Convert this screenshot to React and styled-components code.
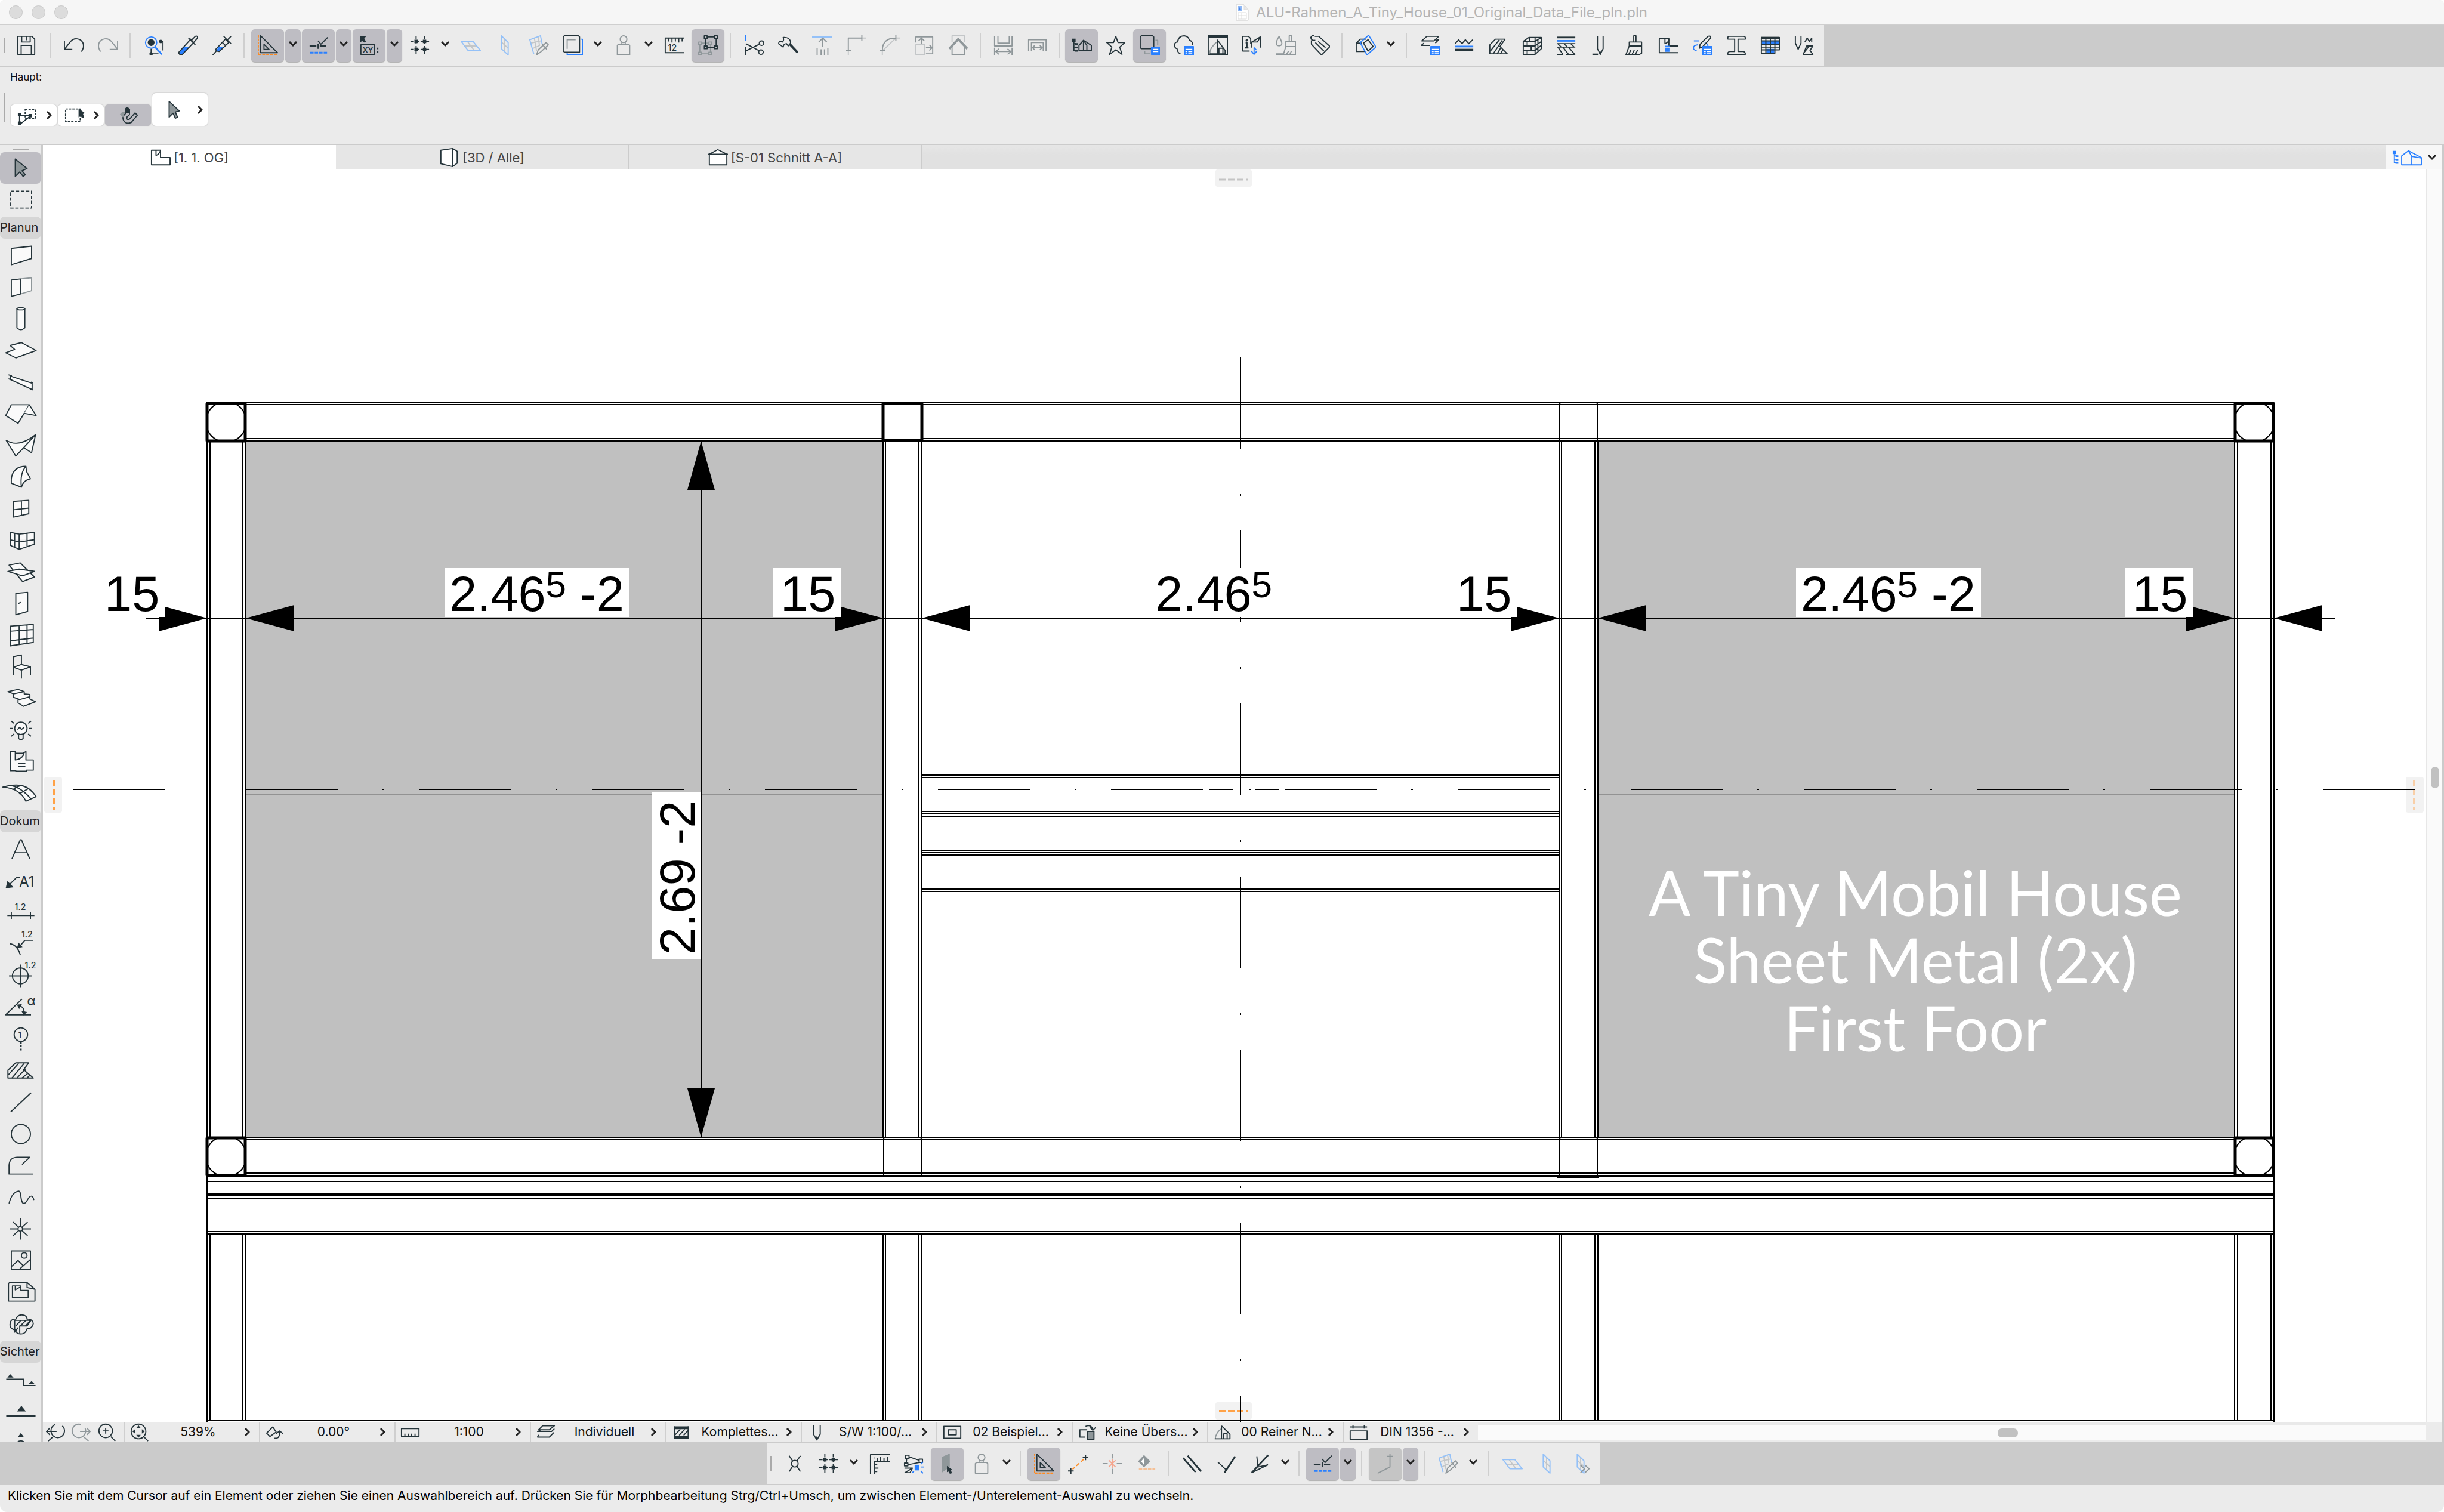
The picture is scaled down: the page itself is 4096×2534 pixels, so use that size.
import React from 'react';
import styled, { createGlobalStyle, css } from 'styled-components';

const D = '#25343a';
const G = '#8f979a';
const LG = '#c3c6c8';
const B = '#2a80ff';
const LB = '#94c1f8';
const O = '#ff8a1f';
const UI = "Inter, 'Liberation Sans', sans-serif";

const GlobalStyle = createGlobalStyle`
  * { box-sizing: border-box; }
  body { margin: 0; background: #fff; font-family: ${UI}; }
  button { font: inherit; color: inherit; border: 0; margin: 0; padding: 0; background: none; }
  svg { display: block; flex: none; }
`;

/* ---------- icon primitives ---------- */

const L = ({ d, c = D, f = 'none', w = 2, dash }) => (
  <path d={d} stroke={c} fill={f} strokeWidth={w} strokeDasharray={dash} strokeLinejoin="round" />
);
const T = ({ x, y, s = 12, children, c = D, weight = 500 }) => (
  <text x={x} y={y} fontSize={s} fontWeight={weight} fill={c} fontFamily="Inter, sans-serif">{children}</text>
);
const Note = () => (
  <>
    <L d="M19 20H35V35H19z" c={B} f={B} />
    <path d="M21 25H33M21 29H24M26 29H33M21 33H24M26 33H33" stroke="#fff" strokeWidth="2" />
  </>
);
const Person = () => (
  <>
    <circle cx="18" cy="7" r="6" fill="none" stroke={G} strokeWidth="2" />
    <L d="M15 12V16M21 12V16M9 16H27L29 18V35H7V18z" c={G} />
  </>
);
const Tri = () => (
  <>
    <L d="M5 1V31H35z" />
    <L d="M11 16V25H20z" />
    <L d="M1 0V35" c={O} dash="4 2" />
    <L d="M1 35H36" c={O} w={3} dash="5 2" />
  </>
);
const Snap = () => (
  <>
    <L d="M17 10L22 16L34 4" />
    <L d="M2 19H14M20 19H31M17 15V24" />
    <L d="M3 31H33" c={B} w={3} dash="6 2" />
  </>
);
const GridIcon = () => (
  <>
    <L d="M1 11H36M1 25H36M11 1V36M26 1V36" dash="6 3" />
    <path d="M8 8h6v6h-6zM23 8h6v6h-6zM8 22h6v6h-6zM23 22h6v6h-6z" fill={D} />
  </>
);
const PlaneA = () => (
  <>
    <L d="M7 19H29M12 11L24 27" c={LG} />
    <L d="M1 11H22L35 27H13z" c={LB} />
  </>
);
const PlaneB = () => (
  <>
    <L d="M18 6V29M12 12L24 23" c={LG} />
    <L d="M12 1L24 13V35L12 24z" c={LB} />
  </>
);
const PlaneC = () => (
  <>
    <L d="M10 4L14 28M17 2L19 17M4 14L22 10M6 24L20 18" c={LG} />
    <L d="M9 33L2 8L21 1L24 16" c={LB} />
    <L d="M14 35L17 26L31 13L35 17L21 30zM24 16L32 25" c={G} />
  </>
);
const Nodes = ({ c, x, y }) => (
  <g transform={`translate(${x} ${y})`}>
    <L d="M6 3H19M22 6V19M19 22H6M3 19V6" c={c} />
    <L d="M1 1h5v5h-5zM19 1h5v5h-5zM1 19h5v5h-5zM19 19h5v5h-5z" c={c} />
  </g>
);
const Tree = ({ c = D }) => (
  <>
    <path d="M1 6h6v6h-6zM6 14h5v3h-5zM6 20h5v3h-5zM6 26h5v3h-5z" fill={c} />
    <L d="M4 10V28M4 15H8M4 21H8M4 27H8" c={c} />
  </>
);
const Hatch = () => (
  <>
    <L d="M3 33V17L13 7H30L21 20L34 33z" />
    <L d="M4 28L20 8M9 33L25 9M16 33L22 23M22 33L26 26" />
  </>
);
const Pen = ({ x = 0 }) => <g transform={`translate(${x} 0)`}><L d="M13 2V24L18 34L23 24V2" /><L d="M18 29V34" w={3} /></g>;

const glyphs = {
  save: <><L d="M3 2H28L33 7V34H3z" /><L d="M10 2V12H25V2M18 2V9" /><L d="M9 34V18H27V34" /></>,
  undo: <L d="M1 10V25H15M1 25L12 11C18 4 30 5 34 14C36 20 34 26 31 29" />,
  redo: <L d="M35 10V25H21M35 25L24 11C18 4 6 5 2 14C0 20 2 26 5 29" c={G} />,
  find: <><circle cx="13" cy="13" r="10" fill="none" stroke={B} strokeWidth="2" /><circle cx="13" cy="13" r="6" fill={D} /><L d="M20 21L32 34" c={B} w={3} /><L d="M34 11V27M28 11H34" /><L d="M13 24V33H26" /><circle cx="30" cy="11" r="3" fill={D} /><circle cx="13" cy="33" r="3" fill={D} /></>,
  dropper: <><path d="M2 33L9 20H21L8 34z" fill={B} /><L d="M4 35L1 31L23 7L28 13L8 34z" /><L d="M19 5L31 17M24 9L31 2Q35 0 35 5L28 13" /></>,
  syringe: <><path d="M8 28L12 20H21L14 29z" fill={B} /><L d="M1 36L8 28L7 25L24 7L30 13L13 29L8 28M21 2L34 15M27 9L34 2M18 12L24 18" /></>,
  tri: <Tri />,
  snap: <Snap />,
  xy: <><path d="M2 2L12 2L9 6L12 11L9 13L5 10L2 13z" fill={D} /><L d="M3 17H27V34H3z" /><T x={6} y={31} s={13} weight={600}>XY</T><path d="M31 22h3v3h-3zM31 28h3v3h-3z" fill={D} /></>,
  grid: <GridIcon />,
  planeA: <PlaneA />,
  planeB: <PlaneB />,
  planeC: <PlaneC />,
  layers: <><L d="M33 7H35V35H8V31" c={B} /><L d="M3 1H28L30 3V30H3L1 28V3z" /><L d="M8 24V8H23" c={G} /></>,
  person: <Person />,
  ruler12: <><L d="M36 5H2V31H36M8 5V11M14 5V13M20 5V11M26 5V13M32 5V11" /><T x={7} y={27} s={15}>12</T></>,
  nodes: <><Nodes c={G} x={0} y={11} /><Nodes c={D} x={10} y={0} /></>,
  scissors: <><L d="M3 0V10" c={B} /><L d="M3 21V36M3 15L28 28M3 28L27 16" /><circle cx="31" cy="14" r="4" fill="none" stroke={D} strokeWidth="2" /><circle cx="30" cy="30" r="4" fill="none" stroke={D} strokeWidth="2" /></>,
  hammer: <><L d="M9 4C18 3 23 8 22 15L18 19L15 15Q10 15 9 21L1 15Q1 9 8 12Q11 8 9 4z" /><L d="M20 15L35 31" w={4} /></>,
  toline: <><L d="M0 3H36" c={LB} w={3} /><L d="M19 20V6M12 12L19 5L26 12M9 36V23M16 36V25M22 36V25M28 36V23" c={G} /></>,
  corner: <><L d="M4 27V36M28 5H36" c={LG} /><L d="M4 27V5H28M28 0V10M0 27H9" c={G} /></>,
  fillet: <><L d="M4 27V36M28 5H36M6 26L26 7" c={LG} /><L d="M4 27C4 13 12 5 28 5M28 0V10M0 27H9" c={G} /></>,
  resize: <><L d="M3 17H19V34H3z" c={LG} /><L d="M3 13V3H33V33H21M13 15V6M8 10L13 5L18 10M21 22H31M27 17L32 22L27 27" c={G} /></>,
  eave: <><L d="M7 12V1H29V12" c={LG} /><L d="M2 24L18 7L34 24" c={G} w={4} /><L d="M7 21V35H29V21" c={G} /></>,
  dimA: <><L d="M3 2V19H34V2M9 2V14H29V2M3 22V36M34 22V36M5 29H32M11 24L5 29L11 34M26 24L32 29L26 34" c={G} /></>,
  dimB: <><L d="M3 28V8H34V28M8 28V13H29V28M10 22H27M14 18L10 22L14 26M23 18L27 22L23 26" c={G} /></>,
  house: <><Tree /><L d="M13 27V18L21 9L35 18V27zM21 9L27 18V27M21 9V27" /></>,
  star: <L d="M18 2L22 13L34 13L25 21L29 34L18 26L7 34L11 21L2 13L14 13z" />,
  pages: <><L d="M28 9H32V18M9 28V33H18" c={G} /><L d="M3 1H23L25 3V24H3L1 22V3z" /><L d="M21 21H36V34H21z" c={B} f={B} /><path d="M24 25H33M24 29H33" stroke="#fff" strokeWidth="2" /></>,
  cloud: <><L d="M12 33C6 31 7 26 6 24C0 22 0 12 7 12C8 3 14 1 19 1C26 2 27 6 28 9C33 10 34 15 33 17" /><g><Note /></g></>,
  view: <><L d="M1 1H35V35H1z" /><path d="M0 0H36V5H0z" fill={D} /><L d="M4 33C3 24 10 18 16 12" c={G} /><L d="M17 8V33M17 8L31 27V33H4M20 33V23H27V33" /></>,
  info: <><L d="M16 6L12 2H2V28H14M16 6V15M18 22V12L33 3V22M18 12H28L33 3" /><circle cx="9" cy="9" r="2" fill={D} /><L d="M7 13H9V22M6 22H12" w={3} /><L d="M22 22V34M17 28L22 34M27 28L22 34M22 22L26 26" c={B} /></>,
  paint: <><L d="M6 2C1 10 1 13 1 15C2 20 10 20 11 15C11 11 9 8 6 2z" c={G} /><L d="M24 11V1H28V11M18 11H35V20H18zM18 20L14 33M35 20V35H1M23 28L19 34M28 28L25 34" c={G} /><L d="M1 34H14" c={G} w={4} /></>,
  tag: <><L d="M9 2H16L36 20L21 35L3 16V9M10 9Q2 10 2 4Q3 0 8 1M10 13L25 28M15 11L28 22" /></>,
  cube: <><L d="M18 7H8L1 14V29H16M1 14H11" /><L d="M23 0L36 21L20 35L8 13z" c={B} /><L d="M22 8L31 20L22 28L14 14z" /></>,
  attrLayer: <><L d="M12 2H33L25 10H3zM7 14L2 18H18M28 9L33 8L27 14" /><Note /></>,
  lineType: <><L d="M2 15L8 8L14 15L20 8L26 15L33 8" /><L d="M2 20H34" c={B} w={3} /><L d="M2 26H34" w={4} /></>,
  hatch: <Hatch />,
  bricks: <><L d="M2 11L12 4H34V24L23 34H2zM2 11H23V34M23 11L34 4M2 19H23L34 11M2 27H23L34 18M9 11V19M16 19V27M9 27V34M13 4V11M23 4V11M28 8V28" /></>,
  composite: <><L d="M2 4H34" w={3} /><L d="M2 10H34" c={B} w={3} /><L d="M2 15H34M2 34H12M18 34H34M2 21H34M3 21L12 34M12 21L22 34M22 21L33 34M3 15L9 21M14 15L20 21M26 15L32 21" /></>,
  pen: <><Pen /><L d="M4 34H14" w={3} /></>,
  brush: <><L d="M17 11V1H21V11M9 12H31V19H9zM9 19L3 35H25L31 32V19M12 26L8 34M18 26L14 34M24 26L20 34" /></>,
  zoneCat: <><L d="M2 6H19V19H36V31H2z" /><L d="M12 6V15Q18 13 19 8" /><L d="M12 20H20M12 24H20M12 28H20" c={B} w={3} /></>,
  penList: <><L d="M3 10H12M10 17C0 18 0 26 8 27M22 14Q28 14 28 20" c={B} /><L d="M13 23L14 16L28 2Q33 0 33 5L19 20zM20 9" /><Note /></>,
  profile: <L d="M5 2H31Q34 2 34 5V7H21V29H31Q34 30 34 34H3Q2 30 6 29H15V7H3Q2 2 5 2z" />,
  table: <><path d="M3 10h10v5h-10zM3 10h30v5h-30zM11 24h14v8h-14z" fill={B} /><L d="M2 4H34V26H26V32H2zM2 10H34M2 16H34M2 21H34M2 26H26M10 4V32M18 4V32M26 4V26" /><L d="M2 5H34" w={4} /></>,
  penSet: <><g transform="translate(-11 0)"><L d="M13 2V14L18 25L23 14V2M18 20V26" /></g><L d="M19 12L23 5L27 11L31 5V12M16 34L22 19H33L28 27L33 34zM18 30L26 20" /></>,
  cross: <><L d="M8 4L14 13M28 4L22 13M8 32L14 23M28 32L22 23" /><circle cx="18" cy="18" r="6" fill="none" stroke={D} strokeWidth="2" /></>,
  rulers: <><L d="M36 2H2V36M9 36V14H36M8 8H9M14 14V8M20 14V6M26 14V8M32 14V6M9 20H14M9 26H16M9 32H14" /></>,
  trace: <><L d="M4 3H10V9H4zM28 10H34V16H28zM2 17H8V22H2zM10 6L28 12M6 9L5 17M8 20L28 16M2 26H16L12 34H2M3 34L14 27" /><path d="M20 20H28V30H20z" fill={B} /><L d="M31 19L35 15M31 31L35 35M31 24H36M16 34L19 31" c={B} /></>,
  pickface: <><path d="M8 6L22 0V24L8 34z" fill={G} /><path d="M17 22L27 29L24 30L26 35L22 36L20 32L17 33z" fill={D} /></>,
  guide: <><L d="M31 2V12M26 7H36M5 26V36M0 31H10" /><L d="M28 10L8 28" c={O} dash="7 4" /></>,
  guideX: <><L d="M18 0V9M18 27V36M1 18H10M26 18H35" c={G} /><L d="M12 12L24 24M24 12L12 24M18 10V26" c="#f5a48c" /></>,
  guideOff: <><L d="M14 4L5 14L14 23L24 14z" c={G} f={G} /><path d="M14 8L9 14L14 20z" fill="#fff" /><L d="M5 28H34" c="#f5c096" w={3} dash="6 2" /></>,
  parallel: <L d="M2 8L24 33M10 4L34 32" w={3} />,
  perp: <><L d="M3 15L18 29" /><L d="M34 5L15 34" w={3} /></>,
  bisect: <><L d="M12 5L14 24L32 20M3 34L32 20" /><L d="M32 3L3 34" w={3} /></>,
  segEnd: <><L d="M26 0V12M21 5H31M26 12V24L4 35" c={G} /></>,
  planeNext: <><PlaneB /><L d="M18 21L25 27L18 34M26 21L33 27L26 34" c={G} /></>,

  selTool: <><L d="M14 8H32V24H14z" dash="4 2" /><L d="M4 16V35M4 19H25M24 19L5 34" /><path d="M1 14h6v6h-6zM20 16h6v6h-6zM1 29h6v6h-6z" fill={D} /></>,
  marqueeSel: <><L d="M2 7H28V29H2z" dash="4 2" /><path d="M25 6L36 14L33 16L35 22L31 23L29 19L25 22z" fill={D} /></>,
  magnet: <><L d="M12 8Q14 2 19 8L19 17L14 22Q14 27 19 25L29 14L33 18L22 31Q12 35 8 26Q6 20 12 15z" /><path d="M11 8Q14 0 20 8V14H11z" fill={D} /><path d="M2 17Q4 12 11 12L8 22z" fill={G} /></>,
  arrow: <L d="M10 3V31L17 24L21 33L25 31L21 22L28 20z" f={G} />,

  story: <L d="M2 5H18V18H35V31H2zM10 5V14Q15 13 17 7" f="#fff" />,
  box3d: <L d="M3 5L24 2L32 7V28L24 34L3 29zM24 2V34" f="#fff" />,
  section: <L d="M3 12L18 4L34 12V31H3zM1 12H36" f="#fff" />,

  zoomPrev: <><circle cx="22" cy="16" r="12" fill="none" stroke={D} strokeWidth="2" strokeDasharray="52 13 12" /><L d="M2 17H20M8 11L2 17L8 23M13 27L5 34" /></>,
  zoomNext: <><circle cx="14" cy="16" r="12" fill="none" stroke={G} strokeWidth="2" strokeDasharray="60 10" /><L d="M16 17H34M28 11L34 17L28 23M23 27L31 34" c={G} /></>,
  zoomIn: <><circle cx="16" cy="16" r="12" fill="none" stroke={D} strokeWidth="2" /><L d="M16 11V21M11 16H21M25 26L33 34" /></>,
  zoomFit: <><circle cx="16" cy="17" r="13" fill="none" stroke={D} strokeWidth="2" /><path d="M16 6l4 5h-8zM16 28l4-5h-8zM5 17l5-4v8zM27 17l-5-4v8z" fill={D} /><L d="M25 26L33 34" /></>,
  rotate: <><L d="M3 20L14 9L20 18L9 26z" /><L d="M17 29H21Q27 27 26 17M20 21L26 16L32 21" /></>,
  scale: <L d="M2 12H33V26H2zM8 26V21M14 26V21M20 26V21M26 26V21" />,
  stack: <L d="M12 7H33L24 14H5zM9 17H3L28 17L33 12M5 23L3 27H24L32 19M9 14L4 17" />,
  solid: <><path d="M5 8H31V13H5zM5 25H31V30H5z" fill={D} /><L d="M6 8V30M30 8V30M6 24L16 13M14 24L24 13M22 24L30 15" /></>,
  penS: <L d="M12 6V22L18 32L24 22V6M18 26V32" />,
  frame: <L d="M3 8H33V29H3zM11 14H25V23H11z" />,
  override: <><L d="M17 14H4V27H13M14 8Q24 4 27 13M22 10L27 15L32 10" /><L d="M17 17H29V31H17z" f={G} /></>,
  renov: <><L d="M4 30Q5 19 15 12" c={G} /><L d="M15 7V30M15 7L30 22V30H3M19 30V21H25V30" /></>,
  dimStd: <L d="M3 16H33V31H3zM3 9H33M8 6V12M28 6V12" />,
};

const W = '#fafafa';
const toolGlyphs = {
  arrow: <L d="M26 11V42L34 34L40 42L44 39L38 32L47 28z" f={G} />,
  marquee: <L d="M18 12H55V42H18z" dash="6 3" />,
  wall: <L d="M19 14L55 10V32L19 43z" f={W} />,
  door2: <><L d="M35 12L55 10V33L35 39z" c={G} f={W} /><L d="M19 14L35 12V39L19 43z" f={W} /></>,
  column: <><L d="M29 9V43Q36 49 43 43V9z" f={W} /><ellipse cx="36" cy="9" rx="7" ry="2" fill={W} stroke={D} strokeWidth="2" /></>,
  slab: <L d="M9 31L27 40L63 27L37 13L17 18L25 25z" f={W} />,
  beam: <><L d="M17 16L56 29V40L17 22z" f={W} /><L d="M14 14L20 16M14 21L19 23M54 27L58 28M52 39L58 41" /></>,
  roof: <><L d="M9 30L19 11H51L31 44z" f={W} /><L d="M51 11L63 30L42 26" f={W} /></>,
  shell: <><L d="M62 8L55 40L41 31" f={W} /><L d="M10 18Q32 32 62 8L27 46z" f={W} /></>,
  morph: <><L d="M19 38V30Q22 8 45 8L46 17L53 30Q40 33 37 45z" f={W} /><L d="M45 8Q34 20 37 45" /></>,
  window: <L d="M23 14L50 12V36L23 42zM37 13V39M23 29L50 26" f={W} />,
  curtain: <L d="M17 13L33 16L60 13V34L33 43L17 36zM33 16V43M25 15V39M47 14V38M17 26L33 30L60 26" f={W} />,
  skylight: <><L d="M15 15L35 11L60 36L39 44z" f={W} /><L d="M13 26L33 22L60 26L39 34z" f={W} /></>,
  door: <L d="M27 9L48 7V41L27 47zM31 27L36 25" f={W} />,
  opening: <L d="M17 11L58 8V40L17 46zM33 10V44M47 9V42M17 20L58 17M17 37L58 32" f={W} />,
  chair: <><L d="M23 42V9L37 6V24" /><L d="M23 28L37 23L53 27L37 33z" f={W} /><L d="M53 27V42M37 33V48" /></>,
  stair: <L d="M13 15L31 11L42 15L23 19zM23 19V25L34 29L52 24V20L42 19V15M31 27V35L41 41L62 33L52 28V24" f={W} />,
  lamp: <><circle cx="36" cy="24" r="11" fill={W} stroke={D} strokeWidth="2" /><L d="M30 26L34 22L37 26L42 22M32 34V42Q36 46 40 42V34" /><L d="M16 24H22M19 11L24 15M19 38L24 34M56 24H50M54 11L49 15M54 38L49 34" /></>,
  zone: <L d="M17 43V9H26V12H40L45 9V24H58V42H46V44H27V43zM26 12V24Q38 23 42 12M31 30H44M31 35H44" f={W} />,
  mesh: <><L d="M4 16Q22 11 36 13Q52 16 63 33L45 41Q34 18 4 16z" f={W} /><L d="M17 13Q36 16 54 37M36 13Q27 16 21 21M49 19L33 28" /></>,
  text: <L d="M20 44L35 10H37L52 44M26 33H46" />,
  label: <><path d="M9 40L12 27L23 38z" fill={D} /><L d="M14 35L28 21H34" /><T x={33} y={37} s={25} weight={400}>A1</T></>,
  dim: <><T x={25} y={22} s={15}>1.2</T><L d="M12 32H60M19 26V39M53 26V39" /></>,
  dimRad: <><T x={37} y={15} s={15}>1.2</T><L d="M16 26Q30 28 35 46M58 20H43L33 32" /><path d="M29 34L32 24L39 32z" fill={D} /></>,
  level: <><circle cx="35" cy="27" r="14" fill="none" stroke={D} strokeWidth="2" /><L d="M15 27H55M35 7V47" /><T x={43} y={14} s={15}>1.2</T></>,
  angle: <><T x={47} y={23} s={22}>α</T><L d="M54 40H9L38 12M31 24Q42 24 42 38" /><path d="M29 22L38 21L33 30zM37 33L47 35L41 41z" fill={D} /></>,
  marker: <><circle cx="36" cy="19" r="12" fill="none" stroke={D} strokeWidth="2" /><T x={31} y={25} s={15}>1</T><L d="M36 32V48" dash="3 3" w={3} /></>,
  fill: <><L d="M13 40V26L27 13H50L41 25L58 40z" /><L d="M14 34L32 14M20 40L42 14M29 40L44 24M38 40L48 32M47 40L52 35" /></>,
  line: <L d="M18 44L54 10" />,
  circle: <circle cx="36" cy="27" r="17" fill="none" stroke={D} strokeWidth="2" />,
  poly: <L d="M58 42H15V26Q16 12 30 12H52L38 25" />,
  spline: <L d="M15 38Q20 18 32 16C38 16 34 36 41 38C48 38 48 24 55 25Q58 26 59 32" />,
  hotspot: <><circle cx="35" cy="27" r="4" fill="none" stroke={D} strokeWidth="2" /><L d="M16 27H31M39 27H54M35 8V23M35 31V46M22 15L32 24M48 15L38 24M22 39L32 30M48 39L38 30" /></>,
  image: <><L d="M19 10H53V43H19zM19 38L31 27L41 37M33 43L53 25" /><circle cx="42" cy="18" r="5" fill="none" stroke={D} strokeWidth="2" /></>,
  drawing: <><L d="M16 10H47L61 22V43H14V12zM47 10V19L61 22" /><L d="M21 16H36V24H49V37H21zM26 16V23L35 18" /></>,
  change: <><L d="M26 38Q15 36 17 26Q18 18 27 19Q31 9 42 12Q47 14 47 19Q57 18 58 27Q56 36 47 36Q44 46 35 45Q28 45 26 38z" /><L d="M25 21H54L47 31H34V44M25 21V42L31 34M27 31L36 21M35 31L45 21M44 31L53 21" /></>,
  sectionTool: <><path d="M12 23L17 17L23 23zM49 35L55 29L61 35z" fill={D} /><L d="M10 26H41V37H62" /></>,
  elevTool: <><path d="M29 27L37 17L45 27z" fill={D} /><L d="M10 35H62" /></>,
  interiorTool: <><path d="M31 16L36 9L41 16zM16 30L22 25L25 31zM56 30L50 25L47 31z" fill={D} /><circle cx="36" cy="32" r="9" fill="none" stroke={D} strokeWidth="2" /></>,
};

const Icon = ({ name }) => <svg width="34" height="34" viewBox="0 0 36 36" aria-hidden="true">{glyphs[name]}</svg>;
const ToolIcon = ({ name }) => <svg width="68" height="51" viewBox="0 0 72 54" aria-hidden="true">{toolGlyphs[name]}</svg>;
const ChevDown = () => (
  <svg width="14" height="10" viewBox="0 0 14 10" aria-hidden="true"><path d="M1 1L7 7L13 1" fill="none" stroke="#222" strokeWidth="3" /></svg>
);
const ChevRight = () => (
  <svg width="10" height="14" viewBox="0 0 10 14" aria-hidden="true"><path d="M2 1L8 7L2 13" fill="none" stroke="#222" strokeWidth="3" /></svg>
);

/* ---------- layout ---------- */

const Window = styled.div`
  display: flex; flex-direction: column; height: 100vh; min-height: 900px; overflow: hidden;
  background: #ebebeb; border-radius: 8px 8px 12px 12px;
`;
const TitleBar = styled.header`
  display: flex; align-items: center; height: 42px; flex: none; padding-left: 15px;
  background: #f6f6f6; border-bottom: 2px solid #cfcfcf;
`;
const Lights = styled.div`display: flex; gap: 15px; flex: none;`;
const Light = styled.button`
  width: 23px; height: 23px; border-radius: 50%; background: #dcdcdc; border: 1px solid #c9c9c9;
`;
const DocTitle = styled.h1`
  display: flex; align-items: center; gap: 12px; margin: 0 0 0 auto; width: 50.5%; padding: 2px 0 0 36px;
  font-size: 24px; line-height: 32px; font-weight: 400; color: #b4b4b4; white-space: nowrap;
`;
const DockRow = styled.div`
  display: flex; flex: none; background: #cbcbcb;
  ${p => p.$bottom
    ? css`height: 72px; padding: 2px 0 2px 1285px;`
    : css`height: 70px; border-bottom: 2px solid #cbcbcb;`}
`;
const Bar = styled.div`
  display: flex; align-items: center; gap: 2px; background: #ebebeb; padding: 0 6px;
`;
const Grip = styled.span`width: 2px; height: 26px; background: #aaa; flex: none;`;
const BarGrip = styled(Grip)`margin-right: ${p => p.$space}px;`;
const Sep = styled.span`
  width: 2px; height: 42px; background: #cfcfcf; flex: none;
  margin: 0 ${p => (p.$tight ? 7 : 9)}px 0 ${p => (p.$wide ? 10 : 7)}px;
`;
const BarButton = styled.button`
  display: flex; align-items: center; justify-content: center; flex: none;
  width: ${p => (p.$narrow ? 26 : 55)}px; height: 55px; border-radius: 6px;
  ${p => p.$on && css`background: ${p.$dim ? '#c5c5c5' : '#bebdc3'}; box-shadow: 0 1px 1px #b0b0b0;`}
  ${p => p.$narrow && css`padding-bottom: 4px;`}
`;

const InfoBox = styled.section`
  height: 131px; flex: none; border-bottom: 2px solid #cbcbcb; padding: 7px 0 0 6px;
`;
const InfoLabel = styled.div`padding-left: 11px; font-size: 17px; line-height: 20px; color: #111;`;
const InfoRow = styled.div`display: flex; align-items: flex-end; gap: 2px; padding-top: 17px;`;
const InfoGrip = styled(Grip)`height: 49px; align-self: flex-start; margin-right: 8px;`;
const InfoButton = styled.button`
  display: flex; align-items: center; justify-content: center; flex: none; border-radius: 6px;
  background: ${p => (p.$on ? '#bebdc3' : '#fff')}; box-shadow: 0 0 2px #a8a8a8;
  ${p => (p.$big
    ? css`width: 93px; height: 55px; gap: 22px; padding-left: 10px;`
    : css`width: 77px; height: 36px; gap: 14px; padding-left: 3px;`)}
`;

const Middle = styled.div`display: flex; flex: 1; min-height: 0;`;
const Sidebar = styled.nav`
  width: 72px; flex: none; border-right: 3px solid #cbcbcb; overflow: hidden;
  display: flex; flex-direction: column; padding-top: 7px;
`;
const Handle = styled.span`width: 27px; height: 2px; margin: 0 auto 3px; background: #aaa; flex: none;`;
const Tool = styled.button`
  display: flex; align-items: center; justify-content: center; height: 53px; flex: none;
  border-radius: 8px; ${p => p.$on && css`background: #bebdc3;`}
`;
const Group = styled.h2`
  margin: 2px 0; height: 37px; flex: none; border-radius: 8px; background: #d6d6d6;
  font-size: 20px; line-height: 37px; font-weight: 400; color: #222; white-space: nowrap;
`;

const Main = styled.main`
  display: flex; flex-direction: column; flex: 1; min-width: 0; border-right: 4px solid #cbcbcb;
`;
const Tabs = styled.div`
  display: flex; height: 41px; flex: none; background: linear-gradient(#e6e6e6, #e1e1e1 40%);
`;
const Tab = styled.button`
  display: flex; align-items: center; justify-content: center; gap: 5px; width: 491px; flex: none;
  font-size: 22px; line-height: 24px; color: #444;
  background: ${p => (p.$on ? '#fff' : '#e6e6e6')};
  ${p => !p.$on && css`border-right: 2px solid #ccc;`}
`;
const NavButton = styled.button`
  display: flex; align-items: center; justify-content: center; gap: 10px; width: 93px; margin-left: auto;
  background: #f7f7f7;
`;
const Stage = styled.div`display: flex; flex: 1; min-height: 0; background: #fff;`;
const Plan = styled.svg`flex: 1; min-width: 0; height: 100%;`;
const VTrack = styled.div`
  position: relative; width: 27px; flex: none; background: #fafafa; border-left: 3px solid #e7e7e7;
`;
const VThumb = styled.span`
  position: absolute; left: 6px; top: 47.7%; width: 14px; height: 36px; border-radius: 7px; background: #c1c1c1;
`;
const ViewBar = styled.div`
  display: flex; height: 34px; flex: none; font-size: 21px; line-height: 34px; color: #111;
`;
const ZoomGroup = styled.div`display: flex; gap: 9px; width: 135px; flex: none; padding-left: 4px;`;
const Option = styled.button`
  display: flex; align-items: center; width: 227px; flex: none; border-left: 2px solid #cfcfcf;
  padding: 0 15px 0 8px;
`;
const OptionText = styled.span`flex: 1; text-align: center; white-space: nowrap; padding-left: 4px;`;
const HTrack = styled.div`
  position: relative; flex: 1; margin-right: 26px; background: #fafafa;
  border-top: 6px solid #e9e9e9; border-bottom: 4px solid #ebebeb;
`;
const HThumb = styled.span`
  position: absolute; left: 54.8%; top: 5px; width: 34px; height: 15px; border-radius: 7px; background: #c1c1c1;
`;
const Hint = styled.footer`
  height: 45px; flex: none; padding: 6px 13px; font-size: 21px; line-height: 24px; color: #000; white-space: nowrap;
`;

/* ---------- toolbar data ---------- */

const topItems = [
  ['save', 'Sichern'], '|w', ['undo', 'Widerrufen'], ['redo', 'Wiederholen'], '|',
  ['find', 'Suchen'], ['dropper', 'Aufnehmen'], ['syringe', 'Übertragen'], '|',
  ['tri', 'Hilfslinien', 1], 'V', ['snap', 'Fangpunkte', 1], 'V', ['xy', 'Tracker', 1], 'V',
  ['grid', 'Raster'], 'v', ['planeA', 'Ebene'], ['planeB', 'Vertikale Ebene'], ['planeC', 'Ebene bearbeiten'],
  ['layers', 'Transparentpause'], 'v', ['person', 'Ansicht'], 'v', ['ruler12', 'Lineal'], ['nodes', 'Gruppen', 1], '|',
  ['scissors', 'Trennen'], ['hammer', 'Anpassen'], ['toline', 'Verlängern'], ['corner', 'Verschneiden'],
  ['fillet', 'Abrunden'], ['resize', 'Größe ändern'], ['eave', 'Dach'], '|t',
  ['dimA', 'Abstand'], ['dimB', 'Länge'], '|t',
  ['house', 'Navigator', 1], ['star', 'Favoriten'], ['pages', 'Transparent', 1], ['cloud', 'Teamwork'],
  ['view', 'Ansichten'], ['info', 'Information'], ['paint', 'Oberflächen'], ['tag', 'Etikett'], '|',
  ['cube', 'Schnittebene'], 'v', '|w',
  ['attrLayer', 'Ebenen'], ['lineType', 'Linientypen'], ['hatch', 'Schraffuren'], ['bricks', 'Baustoffe'],
  ['composite', 'Mehrschichtige Bauteile'], ['pen', 'Stifte'], ['brush', 'Materialien'], ['zoneCat', 'Raumkategorien'],
  ['penList', 'Stil-Sets'], ['profile', 'Profile'], ['table', 'Tabelle'], ['penSet', 'Attribute'],
];
const bottomItems = [
  ['cross', 'Fangen'], ['grid', 'Raster'], 'v', ['rulers', 'Lineale'], ['trace', 'Pause'], ['pickface', 'Flächen wählen', 1],
  ['person', 'Ansicht'], 'v', '|',
  ['tri', 'Hilfslinien', 1], ['guide', 'Hilfslinie erstellen'], ['guideX', 'Hilfslinien löschen'], ['guideOff', 'Radieren'], '|',
  ['parallel', 'Parallel'], ['perp', 'Senkrecht'], ['bisect', 'Winkelhalbierende'], 'v', '|',
  ['snap', 'Fangpunkte', 1], 'V', '|', ['segEnd', 'Teilung', 2], 'V', '|',
  ['planeC', 'Ebene bearbeiten'], 'v', '|w', ['planeA', 'Ebene'], ['planeB', 'Vertikale Ebene'], ['planeNext', 'Nächste Ebene'],
];
const BarItems = ({ items }) => items.map((it, i) => {
  if (typeof it === 'string') {
    if (it[0] === '|') return <Sep key={i} $wide={it === '|w'} $tight={it === '|t'} />;
    return <BarButton key={i} $narrow $on={it === 'V'} aria-label="Optionen"><ChevDown /></BarButton>;
  }
  return (
    <BarButton key={i} $on={!!it[2]} $dim={it[2] === 2} aria-label={it[1]}>
      <Icon name={it[0]} />
    </BarButton>
  );
});

const toolGroups = [
  { title: null, tools: ['arrow', 'marquee'] },
  { title: 'Planun', tools: ['wall', 'door2', 'column', 'slab', 'beam', 'roof', 'shell', 'morph', 'window', 'curtain', 'skylight', 'door', 'opening', 'chair', 'stair', 'lamp', 'zone', 'mesh'] },
  { title: 'Dokum', tools: ['text', 'label', 'dim', 'dimRad', 'level', 'angle', 'marker', 'fill', 'line', 'circle', 'poly', 'spline', 'hotspot', 'image', 'drawing', 'change'] },
  { title: 'Sichter', tools: ['sectionTool', 'elevTool', 'interiorTool'] },
];

const options = [
  ['zoomFit', '539%'], ['rotate', '0.00°'], ['scale', '1:100'], ['stack', 'Individuell'], ['solid', 'Komplettes...'],
  ['penS', 'S/W 1:100/...'], ['frame', '02 Beispiel...'], ['override', 'Keine Übers...'], ['renov', '00 Reiner N...'], ['dimStd', 'DIN 1356 -...'],
];

/* ---------- floor plan ---------- */

const DASH = '154 75 3 58';
const columns = [[347, 352, 407, 412], [1480, 1484, 1540, 1545], [2613, 2617, 2673, 2678], [3745, 3750, 3806, 3811]];
const beamsY = [674, 678, 735, 739, 1906, 1910, 1966, 1971, 1980, 2008, 2064, 2068, 2380];
const slatsY = [1299, 1303, 1360, 1364, 1368, 1425, 1429, 1433, 1490, 1494];
const arrowsX = [[347, -1], [412, 1], [1480, -1], [1545, 1], [2613, -1], [2678, 1], [3745, -1], [3811, 1]];
const corners = [[379, 707], [3778, 707], [379, 1938], [3778, 1938]];
const digits = { fontFamily: "'Liberation Sans', Arial, sans-serif", fontSize: 83, fill: '#000' };

const Fifteen = ({ x }) => (
  <>
    <rect x={x} y="952" width="113" height="82" fill="#fff" />
    <text x={x + 12} y="1024" {...digits}>15</text>
  </>
);
const Width = ({ x, w, tail }) => (
  <>
    <rect x={x} y="952" width={w} height="82" fill="#fff" />
    <text x={x + 8} y="1024" {...digits}>2.46<tspan dy="-23" fontSize="62">5</tspan>{tail && <tspan dy="23">{tail}</tspan>}</text>
  </>
);

const Drawing = () => (
  <Plan viewBox="72 284 3993 2099" preserveAspectRatio="xMinYMin meet" role="img" aria-label="Grundriss 1. OG">
    <g fill="#f2f2f2">
      <rect x="2037" y="284" width="61" height="29" rx="4" />
      <rect x="2037" y="2350" width="61" height="29" rx="4" />
      <rect x="74" y="1302" width="30" height="60" rx="4" />
      <rect x="4032" y="1302" width="30" height="60" rx="4" />
    </g>
    <g fill="none" strokeWidth="4" strokeDasharray="11 4">
      <path d="M2043 301H2092" stroke="#c4c4c4" strokeWidth="3" />
      <path d="M2043 2365H2092" stroke="#ffa247" />
      <path d="M90 1307V1357" stroke="#ffa247" />
      <path d="M4046 1307V1357" stroke="#f8cfa8" />
    </g>

    <g fill="#c0c0c0">
      <rect x="412" y="739" width="1068" height="1167" />
      <rect x="2678" y="739" width="1067" height="1167" />
    </g>
    <path d="M412 1331H1480M2678 1331H3745" stroke="#929292" strokeWidth="2" />

    <g stroke="#000" strokeWidth="2" fill="none">
      {beamsY.map(y => <path key={y} d={`M347 ${y}H3811`} />)}
      <path d="M347 2002H3811" strokeWidth="4" />
      {columns.flat().map(x => <path key={x} d={`M${x} 739V1906M${x} 2068V2380`} />)}
      <path d="M347 1971V2383M3811 1971V2383" />
      {slatsY.map(y => <path key={y} d={`M1545 ${y}H2613`} />)}
      <rect x="1481" y="1907" width="63" height="64" rx="2" />
      <rect x="2614" y="1907" width="63" height="64" rx="2" />
      <rect x="2614" y="675" width="63" height="64" rx="2" />
      <path d="M2610 1973H2680" />
    </g>

    <rect x="1480" y="676" width="65" height="62" rx="1" fill="#fff" stroke="#000" strokeWidth="5" />
    {corners.map(([x, y]) => (
      <g key={`${x}-${y}`} stroke="#000">
        <rect x={x - 32} y={y - 31} width="64" height="63" rx="1" fill="#fff" strokeWidth="5" />
        <path
          d={`M${x - 31} ${y - 14}A34 34 0 0 1 ${x - 14} ${y - 31}M${x + 14} ${y - 31}A34 34 0 0 1 ${x + 31} ${y - 14}M${x + 31} ${y + 14}A34 34 0 0 1 ${x + 14} ${y + 31}M${x - 14} ${y + 31}A34 34 0 0 1 ${x - 31} ${y + 14}`}
          fill="none" strokeWidth="2"
        />
      </g>
    ))}

    <g stroke="#000" strokeWidth="2" fill="none">
      <path d="M122 1323H2019M4047 1323H2150" strokeDasharray={DASH} />
      <path d="M2026 1323H2066M2093 1323H2096M2103 1323H2143" />
      <path d="M2079 599V2383" strokeDasharray={DASH} />
      <path d="M244 1036H3913M1175 739V1906" />
    </g>
    {arrowsX.map(([x, s]) => <path key={x} d={`M${x} 1036L${x + s * 81} 1014V1058z`} />)}
    <path d="M1175 739L1152 821H1198zM1175 1906L1152 1824H1198z" />

    <Fifteen x={163} />
    <Fifteen x={1296} />
    <Fifteen x={2429} />
    <Fifteen x={3562} />
    <Width x={745} w={310} tail=" -2" />
    <Width x={1928} w={211} />
    <Width x={3010} w={310} tail=" -2" />
    <rect x="1092" y="1328" width="82" height="280" fill="#fff" />
    <text transform="translate(1164 1600) rotate(-90)" {...digits}>2.69 -2</text>

    <g fontFamily="Lato, Carlito, sans-serif" fontSize="104" fill="#fff" textAnchor="middle">
      <text x="3210" y="1535">A Tiny Mobil House</text>
      <text x="3210" y="1648">Sheet Metal (2x)</text>
      <text x="3210" y="1762">First Foor</text>
    </g>
  </Plan>
);

export default function App() {
  return (
    <>
      <GlobalStyle />
      <Window>
        <TitleBar>
          <Lights>
            <Light aria-label="Schließen" />
            <Light aria-label="Minimieren" />
            <Light aria-label="Maximieren" />
          </Lights>
          <DocTitle>
            <svg width="22" height="28" viewBox="0 0 22 28" aria-hidden="true">
              <path d="M1 1H14L21 9V27H1z" fill="#fff" stroke="#ccc" />
              <path d="M14 1V9H21" fill="#e8e8e8" stroke="#ddd" />
              <rect x="3" y="3" width="8" height="8" fill="#8fb8f5" />
              <path d="M5 10L7 4L9 10z" fill="#4a86e8" />
              <path d="M4 14H18V25H4zM4 19H18M10 14V25" fill="none" stroke="#ddd" />
            </svg>
            ALU-Rahmen_A_Tiny_House_01_Original_Data_File_pln.pln
          </DocTitle>
        </TitleBar>

        <DockRow>
          <Bar role="toolbar" aria-label="Standard">
            <BarGrip $space={6} />
            <BarItems items={topItems} />
          </Bar>
        </DockRow>

        <InfoBox>
          <InfoLabel>Haupt:</InfoLabel>
          <InfoRow>
            <InfoGrip />
            <InfoButton aria-label="Auswahlmethode"><Icon name="selTool" /><ChevRight /></InfoButton>
            <InfoButton aria-label="Markierung"><Icon name="marqueeSel" /><ChevRight /></InfoButton>
            <InfoButton $on aria-label="Magnet"><Icon name="magnet" /></InfoButton>
            <InfoButton $big aria-label="Pfeil"><Icon name="arrow" /><ChevRight /></InfoButton>
          </InfoRow>
        </InfoBox>

        <Middle>
          <Sidebar>
            <Handle />
            {toolGroups.map(g => (
              <React.Fragment key={g.tools[0]}>
                {g.title && <Group>{g.title}</Group>}
                {g.tools.map(t => <Tool key={t} $on={t === 'arrow'} aria-label={t}><ToolIcon name={t} /></Tool>)}
              </React.Fragment>
            ))}
          </Sidebar>
          <Main>
            <Tabs>
              <Tab $on><Icon name="story" />[1. 1. OG]</Tab>
              <Tab><Icon name="box3d" />[3D / Alle]</Tab>
              <Tab><Icon name="section" />[S-01 Schnitt A-A]</Tab>
              <NavButton aria-label="Navigator">
                <svg width="50" height="34" viewBox="0 0 53 36" aria-hidden="true">
                  <Tree c={B} />
                  <L d="M17 31V15L29 6L52 18V31zM29 6L35 16L52 19M35 16V31" c={B} />
                </svg>
                <ChevDown />
              </NavButton>
            </Tabs>
            <Stage>
              <Drawing />
              <VTrack><VThumb /></VTrack>
            </Stage>
            <ViewBar>
              <ZoomGroup>
                <button aria-label="Vorheriger Zoom"><Icon name="zoomPrev" /></button>
                <button aria-label="Nächster Zoom"><Icon name="zoomNext" /></button>
                <button aria-label="Vergrößern"><Icon name="zoomIn" /></button>
              </ZoomGroup>
              {options.map(([icon, label]) => (
                <Option key={icon}><Icon name={icon} /><OptionText>{label}</OptionText><ChevRight /></Option>
              ))}
              <HTrack><HThumb /></HTrack>
            </ViewBar>
          </Main>
        </Middle>

        <DockRow $bottom>
          <Bar role="toolbar" aria-label="Zeichenhilfen">
            <BarGrip $space={9} />
            <BarItems items={bottomItems} />
          </Bar>
        </DockRow>
        <Hint>
          Klicken Sie mit dem Cursor auf ein Element oder ziehen Sie einen Auswahlbereich auf. Drücken Sie für Morphbearbeitung Strg/Ctrl+Umsch, um zwischen Element-/Unterelement-Auswahl zu wechseln.
        </Hint>
      </Window>
    </>
  );
}
